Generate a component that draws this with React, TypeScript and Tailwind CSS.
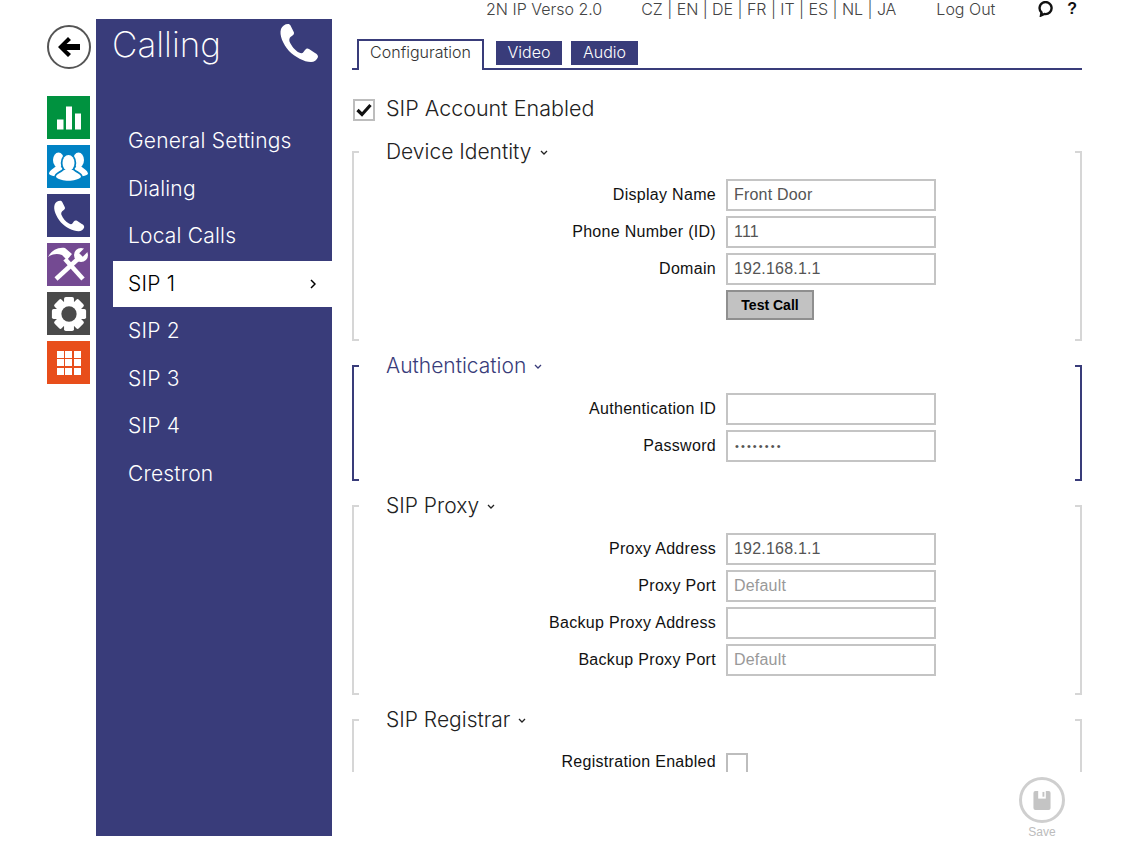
import React from "react";

const font = "font-['Inter','Liberation_Sans',sans-serif]";

const PhoneIcon = ({ className }: { className?: string }) => (
  <svg viewBox="0 0 40 40" className={className} fill="currentColor">
    <path d="M9 1 C6 1 3 3 2 6 C0 12 4 21 10 28 C16 34 25 39 32 39 C35 39 38 37 39 34 C39 32 38 31 36 30 L30 26 C28.500 25 27 25.500 26 27 L24.500 29 C23.500 30.500 22 30.500 20 29.500 C16 27.500 12.500 23 10.500 18.500 C10 16.500 10.500 15 11.500 14 L13.500 12.500 C15 11.500 15.500 10 14.500 8.500 L11.500 2.500 C11 1.500 10 1 9 1 Z" />
  </svg>
);

const Chevron = () => (
  <svg viewBox="0 0 8 5" className="w-2 h-[5px]" fill="none" stroke="currentColor" strokeWidth="1.3">
    <path d="M1 1 L4 4 L7 1" />
  </svg>
);

const SideTile = ({ color, children }: { color: string; children: React.ReactNode }) => (
  <div className={`w-[43px] h-[43px] flex items-center justify-center ${color}`}>{children}</div>
);

const navItems = ["General Settings", "Dialing", "Local Calls", "SIP 1", "SIP 2", "SIP 3", "SIP 4", "Crestron"];

const Bracket = ({ active }: { active?: boolean }) => {
  const c = active ? "border-[#393c7a]" : "border-[#d6d6d6]";
  return (
    <>
      <span className={`absolute left-0 top-0 w-[7px] h-full border-l-2 border-t-2 border-b-2 ${c}`} />
      <span className={`absolute right-0 top-0 w-[7px] h-full border-r-2 border-t-2 border-b-2 ${c}`} />
    </>
  );
};

const Section = ({ title, active, children }: { title: string; active?: boolean; children: React.ReactNode }) => (
  <section className="relative">
    <Bracket active={active} />
    <h2 className={`relative -mt-[13px] ml-[34px] h-7 flex items-center gap-[8px] text-[21px] font-light ${active ? "text-[#393c7a]" : "text-[#222]"}`}>
      {title}
      <Chevron />
    </h2>
    <div className="relative mt-[13px] flex flex-col gap-[5px]">{children}</div>
  </section>
);

const Row = ({ label, children }: { label: string; children: React.ReactNode }) => (
  <div className="flex items-center">
    <label className="w-[364px] text-right text-[16px] tracking-[0.3px] text-[#111] font-['Liberation_Sans',sans-serif]">{label}</label>
    <div className="ml-[10px]">{children}</div>
  </div>
);

const Field = ({ value, placeholder }: { value?: string; placeholder?: string }) => (
  <input
    readOnly
    type="text"
    value={value ?? ""}
    placeholder={placeholder}
    className="block w-[210px] h-8 border-2 border-[#c4c4c4] bg-white px-[6px] text-[16px] tracking-[0.2px] text-[#555] placeholder:text-[#999] outline-none font-['Liberation_Sans',sans-serif]"
  />
);

export default function App() {
  return (
    <div className={`w-[1122px] h-[845px] bg-white flex overflow-hidden ${font}`}>
      <div className="ml-[47px] w-[43px] flex flex-col">
        <button className="mt-[25px] w-11 h-11 rounded-full border-2 border-[#555] flex items-center justify-center">
          <svg viewBox="0 0 24 20" className="w-6 h-5" fill="#000">
            <path d="M11 0 L14 3 L9.500 7 L23 7 L23 13 L9.500 13 L14 17 L11 20 L1 10 Z" />
          </svg>
        </button>
        <div className="mt-[27px] flex flex-col gap-[6px]">
          <SideTile color="bg-[#00923f]">
            <svg viewBox="0 0 24 24" className="w-6 h-6" fill="#fff">
              <rect x="0" y="13.500" width="6.500" height="10" />
              <rect x="9" y="0.500" width="6" height="23" />
              <rect x="18" y="7.500" width="6" height="16" />
            </svg>
          </SideTile>
          <SideTile color="bg-[#0082c4]">
            <svg viewBox="0 0 43 43" className="w-[43px] h-[43px]" fill="#fff">
              <ellipse cx="11.500" cy="15" rx="5.500" ry="7.500" />
              <path d="M10 20 C7 24 2 25 2 29 C4 31 9 32 15 31 L18 24 Z" />
              <ellipse cx="31.500" cy="15" rx="5.500" ry="7.500" />
              <path d="M33 20 C36 24 41 25 41 29 C39 31 34 32 28 31 L25 24 Z" />
              <g stroke="#0082c4" strokeWidth="3.500">
                <ellipse cx="21.500" cy="18" rx="6" ry="8" />
                <path d="M17 25 C14 28 9 29 9 32 C14 37 29 37 34 32 C34 29 29 28 26 25 Z" />
              </g>
              <ellipse cx="21.500" cy="18" rx="6" ry="8" />
              <path d="M17 25 C14 28 9 29 9 32 C14 37 29 37 34 32 C34 29 29 28 26 25 Z" />
            </svg>
          </SideTile>
          <SideTile color="bg-[#393c7a]">
            <PhoneIcon className="w-[32px] h-[32px] text-white" />
          </SideTile>
          <SideTile color="bg-[#744a92]">
            <svg viewBox="0 0 43 43" className="w-[43px] h-[43px]">
              <path d="M1 14 C5 7 11 4 18 5 L25 11 L20 17 L15 12 C10 10 5 11 1 14 Z" fill="#fff" />
              <path d="M18 16 L36 36" stroke="#fff" strokeWidth="4.500" />
              <path d="M32 15 L9 36" stroke="#fff" strokeWidth="4.500" />
              <circle cx="34" cy="12" r="7" fill="#fff" />
              <path d="M34 12 L42 4" stroke="#744a92" strokeWidth="5" />
            </svg>
          </SideTile>
          <SideTile color="bg-[#4a4a4a]">
            <svg viewBox="0 0 40 40" className="w-[36px] h-[36px]">
              <g fill="#fff">
                <circle cx="20" cy="20" r="14.500" />
                <rect x="14.500" y="1" width="11" height="38" rx="2" />
                <rect x="14.500" y="1" width="11" height="38" rx="2" transform="rotate(45 20 20)" />
                <rect x="14.500" y="1" width="11" height="38" rx="2" transform="rotate(90 20 20)" />
                <rect x="14.500" y="1" width="11" height="38" rx="2" transform="rotate(135 20 20)" />
              </g>
              <circle cx="20" cy="20" r="8.500" fill="#4a4a4a" />
            </svg>
          </SideTile>
          <SideTile color="bg-[#e84e1b]">
            <div className="grid grid-cols-[repeat(3,7px)] gap-[1.5px]">
              {Array.from({ length: 9 }).map((_, i) => (
                <span key={i} className="h-[7px] bg-white" />
              ))}
            </div>
          </SideTile>
        </div>
      </div>

      <aside className="ml-[6px] mt-[19px] w-[236px] h-[817px] bg-[#393c7a] text-white flex flex-col">
        <div className="h-[50px] pl-[16px] pr-[13px] flex items-center justify-between">
          <h1 className="text-[35px] font-extralight">Calling</h1>
          <PhoneIcon className="w-[40px] h-[40px] -mt-[2px]" />
        </div>
        <nav className="ml-[17px] mt-[49px] flex flex-col gap-[1.5px]">
          {navItems.map((item) =>
            item === "SIP 1" ? (
              <div key={item} className="h-[46px] bg-white text-black pl-[15px] pr-4 flex items-center justify-between text-[21px] tracking-[0.2px] font-light">
                {item}
                <svg viewBox="0 0 6 10" className="w-[6px] h-[10px]" fill="none" stroke="#000" strokeWidth="1.5">
                  <path d="M1 1 L5 5 L1 9" />
                </svg>
              </div>
            ) : (
              <div key={item} className="h-[46px] pl-[15px] flex items-center text-[21px] tracking-[0.2px] font-light">
                {item}
              </div>
            )
          )}
        </nav>
      </aside>

      <main className="ml-5 w-[730px] flex flex-col">
        <div className="h-[18px] pl-[134px] flex items-center text-[16px] font-light text-[#444]">
          <span>2N IP Verso 2.0</span>
          <span className="ml-[39px] tracking-[-0.04px]">CZ | EN | DE | FR | IT | ES | NL | JA</span>
          <span className="ml-[40px]">Log Out</span>
          <svg viewBox="0 0 16 16" className="ml-[42px] w-[16px] h-[16px]" fill="none" stroke="#111" strokeWidth="2.400">
            <path d="M4 14.500 L4.500 11.500 A6 6 0 1 1 7.500 13 Z" />
          </svg>
          <span className="ml-[14px] text-[16px] font-bold text-[#111] font-['Liberation_Sans',sans-serif]">?</span>
        </div>

        <div className="mt-[21px] h-[31px] border-b-2 border-[#393c7a] flex items-start text-[16px]">
          <div className="ml-[5px] w-[127px] h-[31px] pb-[7px] border-2 border-b-0 border-[#393c7a] bg-white flex items-center justify-center text-[#333] font-light">
            Configuration
          </div>
          <div className="ml-[12px] mt-[2px] w-[66px] h-[24px] pb-[2px] bg-[#393c7a] text-white font-light flex items-center justify-center">Video</div>
          <div className="ml-[9px] mt-[2px] w-[67px] h-[24px] pb-[2px] bg-[#393c7a] text-white font-light flex items-center justify-center">Audio</div>
        </div>

        <div className="mt-[27px] h-[24px] flex items-center">
          <span className="ml-px w-[22px] h-[22px] mt-[2px] border-2 border-[#bdbdbd] flex items-center justify-center">
            <svg viewBox="0 0 16 14" className="w-4 h-[14px]" fill="none" stroke="#111" strokeWidth="3.200">
              <path d="M1.500 7 L6 11.500 L14.500 2" />
            </svg>
          </span>
          <span className="ml-[11px] -mt-[2px] text-[21.5px] font-light text-[#222]">SIP Account Enabled</span>
        </div>

        <div className="mt-[16px] h-[635px] pt-[14px] overflow-hidden flex flex-col gap-6">
          <Section title="Device Identity">
            <Row label="Display Name"><Field value="Front Door" /></Row>
            <Row label="Phone Number (ID)"><Field value="111" /></Row>
            <Row label="Domain"><Field value="192.168.1.1" /></Row>
            <div className="ml-[374px] h-[51px]">
              <button className="w-[88px] h-[30px] border-2 border-[#8f8f8f] bg-[#c2c2c2] text-[14px] font-bold text-black font-['Liberation_Sans',sans-serif]">
                Test Call
              </button>
            </div>
          </Section>
          <Section title="Authentication" active>
            <Row label="Authentication ID"><Field /></Row>
            <Row label="Password">
              <input
                readOnly
                type="password"
                value="12345678"
                className="block w-[210px] h-8 border-2 border-[#c4c4c4] bg-white px-[7px] text-[11px] tracking-[2.100px] text-[#555] outline-none font-['Liberation_Sans',sans-serif]"
              />
            </Row>
            <div className="h-[14px]" />
          </Section>
          <Section title="SIP Proxy">
            <Row label="Proxy Address"><Field value="192.168.1.1" /></Row>
            <Row label="Proxy Port"><Field placeholder="Default" /></Row>
            <Row label="Backup Proxy Address"><Field /></Row>
            <Row label="Backup Proxy Port"><Field placeholder="Default" /></Row>
            <div className="h-[14px]" />
          </Section>
          <Section title="SIP Registrar">
            <Row label="Registration Enabled">
              <span className="block mt-[6px] mb-[2px] w-[22px] h-[22px] border-2 border-[#bdbdbd]" />
            </Row>
            <div className="h-[60px]" />
          </Section>
        </div>

        <div className="mt-[5px] pr-[10px] self-end flex flex-col items-center w-[70px]">
          <div className="w-[46px] h-[46px] rounded-full border-[3px] border-[#cfcfcf] flex items-center justify-center">
            <svg viewBox="0 0 18 20" className="w-[18px] h-[19px]">
              <path d="M2 0 H16 A2 2 0 0 1 18 2 V18 A2 2 0 0 1 16 20 H2 A2 2 0 0 1 0 18 V2 A2 2 0 0 1 2 0 Z" fill="#c4c4c4" />
              <rect x="5" y="0" width="8" height="8" fill="#fff" />
              <rect x="9.500" y="1" width="2" height="5" fill="#c4c4c4" />
            </svg>
          </div>
          <span className="text-[12px] font-['Liberation_Sans',sans-serif] text-[#bcbcbc]">Save</span>
        </div>
      </main>
    </div>
  );
}
